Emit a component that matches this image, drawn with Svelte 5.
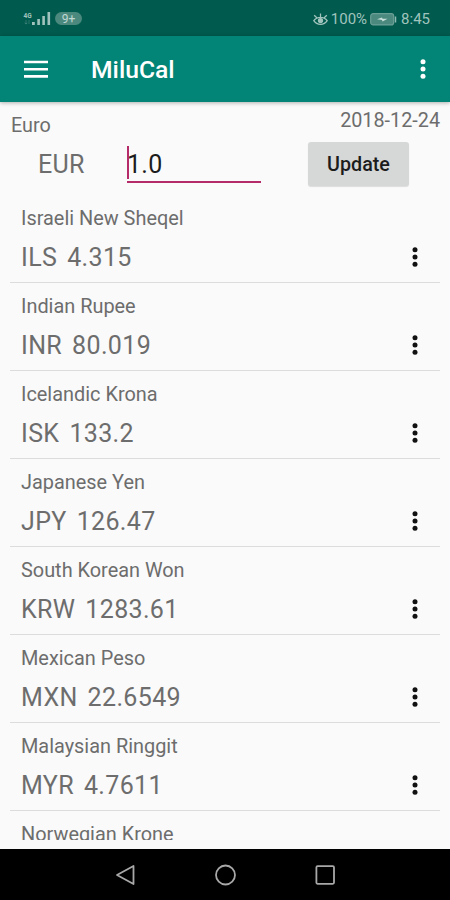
<script>
  const rates = [
    { name: 'Israeli New Sheqel', code: 'ILS', value: '4.315' },
    { name: 'Indian Rupee', code: 'INR', value: '80.019' },
    { name: 'Icelandic Krona', code: 'ISK', value: '133.2' },
    { name: 'Japanese Yen', code: 'JPY', value: '126.47' },
    { name: 'South Korean Won', code: 'KRW', value: '1283.61' },
    { name: 'Mexican Peso', code: 'MXN', value: '22.6549' },
    { name: 'Malaysian Ringgit', code: 'MYR', value: '4.7611' },
    { name: 'Norwegian Krone' }
  ];

  let amount = $state('1.0');
</script>

{#snippet dots()}
  <svg width="6" height="20" viewBox="0 0 6 20" fill="currentColor">
    <circle cx="3" cy="2.8" r="2.5" />
    <circle cx="3" cy="10" r="2.5" />
    <circle cx="3" cy="17.2" r="2.5" />
  </svg>
{/snippet}

<div class="screen">
  <div class="status">
    <svg class="signal" width="28" height="16" viewBox="0 0 28 16" fill="currentColor">
      <text x="0.5" y="7.5" font-size="6.5" font-weight="700">4G</text>
      <path d="M3 10v4M1.5 12.8L3 14l1.5-1.2M6 14v-4" fill="none" stroke="currentColor" stroke-width=".8" opacity=".35" />
      <rect x="9" y="12" width="2.8" height="3" />
      <rect x="14.3" y="9" width="2.6" height="6" />
      <rect x="19.3" y="6" width="2.6" height="9" />
      <rect x="24.5" y="2" width="2.6" height="13" />
    </svg>
    <span class="badge">9+</span>
    <div class="right">
      <svg class="eye" width="15" height="13" viewBox="0 0 15 13" fill="none" stroke="currentColor" stroke-width="1.3">
        <path d="M.8 7.6C4 3.2 11 3.2 14.2 7.6 11 12.6 4 12.6.8 7.6zM7.5 4V.5M3.8 4.8L1.2 2.2M11.2 4.8l2.6-2.6" />
        <circle cx="7.5" cy="7.6" r="2" fill="currentColor" />
      </svg>
      <span class="percent">100%</span>
      <svg class="battery" width="27" height="13" viewBox="0 0 27 13">
        <rect x=".7" y=".7" width="23" height="11.2" rx="2.5" fill="#4b897e" stroke="#6b9f96" stroke-width="1.2" />
        <path d="M25.5 3.5v6" stroke="#8fbab2" stroke-width="1.5" />
        <path d="M7 6.3l5-1.8.5 1.3h5l-5 2.6-.5-1.5z" fill="#c8ded9" />
      </svg>
      <span>8:45</span>
    </div>
  </div>

  <header>
    <svg width="24" height="18" viewBox="0 0 24 18" stroke="currentColor" stroke-width="2.6">
      <path d="M0 2h24M0 9.2h24M0 16.4h24" />
    </svg>
    <h1>MiluCal</h1>
    {@render dots()}
  </header>

  <main>
    <div class="top">
      <span class="base">Euro</span>
      <span class="date">2018-12-24</span>
    </div>
    <div class="entry">
      <span class="code">EUR</span>
      <div class="field">
        <span class="caret"></span>
        <input bind:value={amount} />
      </div>
      <button>Update</button>
    </div>

    <div class="list">
      {#each rates as rate}
        <div class="row">
          <div class="name">{rate.name}</div>
          {#if rate.value}
            <div class="line">
              <span class="cur">{rate.code}</span>
              <span class="value">{rate.value}</span>
              <span class="more">{@render dots()}</span>
            </div>
          {/if}
        </div>
      {/each}
    </div>
  </main>

  <nav>
    <svg width="20" height="22" viewBox="0 0 20 22" fill="none" stroke="currentColor" stroke-width="1.8">
      <path d="M18.5 2v18L2 11z" stroke-linejoin="round" />
    </svg>
    <svg width="22" height="22" viewBox="0 0 22 22" fill="none" stroke="currentColor" stroke-width="1.8">
      <circle cx="11.5" cy="11" r="9.5" />
    </svg>
    <svg width="20" height="20" viewBox="0 0 20 20" fill="none" stroke="currentColor" stroke-width="1.8">
      <rect x="1.4" y="1.2" width="17.6" height="17.6" rx="1.2" />
    </svg>
  </nav>
</div>

<style>
  :global(body) {
    background: #fafafa;
  }

  .screen {
    display: flex;
    flex-direction: column;
    width: 450px;
    height: 900px;
    overflow: hidden;
    background: #fafafa;
    color: #6d6d6d;
    font-family: Roboto, sans-serif;
  }

  svg {
    display: block;
    flex: none;
  }

  .status {
    display: flex;
    align-items: center;
    flex: none;
    height: 36px;
    padding: 0 20px 0 23px;
    box-sizing: border-box;
    background: #005a4e;
    color: #a0c4bd;
    font-size: 15px;
  }

  .badge {
    width: 27px;
    height: 13px;
    margin-left: 4px;
    border-radius: 7px;
    background: #4b897e;
    color: #c0d8d3;
    font-size: 12px;
    line-height: 14px;
    text-align: center;
  }

  .right {
    display: flex;
    align-items: center;
    margin-left: auto;
    padding-top: 2px;
  }

  .percent {
    margin: 0 3px;
  }

  .battery {
    margin-right: 4px;
  }

  header {
    display: flex;
    align-items: center;
    flex: none;
    height: 66px;
    padding: 0 24px;
    box-sizing: border-box;
    background: #028576;
    color: #fff;
    box-shadow: 0 1px 4px rgba(0, 0, 0, 0.3);
    z-index: 1;
  }

  h1 {
    flex: 1;
    margin: 0 0 0 43px;
    font-size: 24.7px;
    font-weight: 500;
  }

  main {
    display: flex;
    flex-direction: column;
    flex: 1;
    min-height: 0;
    padding: 0 10px 9px;
  }

  .top {
    display: flex;
    justify-content: space-between;
    height: 38px;
    font-size: 19.8px;
    line-height: 24px;
  }

  .base {
    padding: 12px 0 0 1px;
  }

  .date {
    padding-top: 7px;
  }

  .entry {
    display: flex;
    height: 55px;
    flex: none;
  }

  .code {
    width: 89px;
    padding-left: 28px;
    font-size: 25px;
    line-height: 50px;
    letter-spacing: 0.3px;
  }

  .field {
    position: relative;
    width: 134px;
    height: 41px;
    border-bottom: 2px solid #b52a68;
  }

  .caret {
    position: absolute;
    left: 0;
    top: 6px;
    width: 2px;
    height: 33px;
    background: #b52a68;
  }

  input {
    width: 100%;
    height: 42px;
    padding: 6px 0 0;
    box-sizing: border-box;
    border: 0;
    outline: 0;
    background: none;
    color: #1c1c1c;
    font: 25px Roboto, sans-serif;
    letter-spacing: 0.3px;
  }

  button {
    width: 101px;
    height: 44px;
    margin: 2px 0 0 47px;
    padding: 0;
    border: 0;
    border-radius: 3px;
    background: #d6d7d7;
    box-shadow: 0 1px 1px rgba(0, 0, 0, 0.12);
    color: #1c1c1c;
    font: 500 19.7px Roboto, sans-serif;
  }

  .list {
    flex: 1;
    min-height: 0;
    overflow: hidden;
  }

  .row {
    height: 88px;
    padding: 12px 22px 0 11px;
    box-sizing: border-box;
    border-bottom: 1px solid #dcdcdc;
  }

  .name {
    font-size: 19.9px;
    line-height: 24px;
  }

  .line {
    display: flex;
    align-items: center;
    margin-top: 12px;
    font-size: 25px;
    line-height: 30px;
    letter-spacing: 0.35px;
  }

  .value {
    margin-left: 10px;
  }

  .more {
    margin: -3px 0 0 auto;
    color: #111;
  }

  nav {
    display: flex;
    align-items: center;
    justify-content: center;
    gap: 79px;
    flex: none;
    height: 51px;
    background: #000;
    color: #a8a8a8;
  }
</style>
